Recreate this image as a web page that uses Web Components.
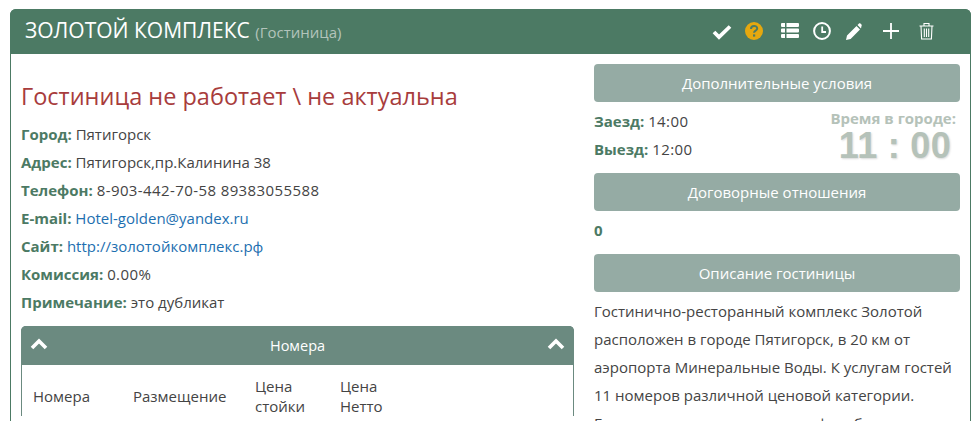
<!DOCTYPE html>
<html>
<head>
<meta charset="utf-8">
<style>
  html, body { margin: 0; padding: 0; height: 421px; overflow: hidden; background: #fff; }
  body { font-family: "Open Sans", sans-serif; font-size: 15px; color: #333; }
</style>
</head>
<body>
<hotel-panel>
  <span slot="title">ЗОЛОТОЙ КОМПЛЕКС</span>
  <span slot="kind">(Гостиница)</span>
  <hotel-info slot="left"></hotel-info>
  <rooms-table slot="left"></rooms-table>
  <hotel-side slot="right"></hotel-side>
</hotel-panel>

<script>
class HotelPanel extends HTMLElement {
  constructor() {
    super();
    const root = this.attachShadow({mode: 'open'});
    root.innerHTML = `
      <style>
        :host { display: block; margin: 9px 9px 0 10px; height: 412px; overflow: hidden; }
        #box { border: 1px solid #4c7a64; border-bottom: none; border-radius: 6px 6px 0 0; height: 412px; box-sizing: border-box; }
        header { margin: -1px -1px 0; height: 45px; background: #4c7a64; border-radius: 6px 6px 0 0; display: flex; align-items: center; padding: 0 15px; color: #fff; }
        h1 { margin: 0; font-size: 21px; font-weight: 400; flex: 1; white-space: nowrap; line-height: 45px; }
        h1 small { font-size: 15px; color: #b3c4bb; font-weight: 400; }
        #icons { display: flex; align-items: flex-start; height: 18px; margin-right: 22px; margin-top: -1px; }
        #icons svg { display: block; }
        #body { display: flex; padding: 0 10px; gap: 20px; }
        #left { width: 553px; padding-top: 26px; }
        #right { width: 366px; padding-top: 10px; }
      </style>
      <div id="box">
        <header>
          <h1><slot name="title"></slot> <small><slot name="kind"></slot></small></h1>
          <div id="icons">
            <svg width="20" height="16" viewBox="0 0 20 16" style="margin:2px 13px 0 0"><path d="M2 8l5 5L18 2.500" fill="none" stroke="#fff" stroke-width="3.800"/></svg>
            <svg width="18" height="18" viewBox="0 0 18 18" style="margin-right:18px"><circle cx="9" cy="9" r="9" fill="#e5a80f"/><path d="M6 7c0-4 6.200-4 6.200-.6 0 2.200-3.200 2.200-3.200 4.400" fill="none" stroke="#4c7a64" stroke-width="2"/><rect x="8" y="12.400" width="2.200" height="2.200" fill="#4c7a64"/></svg>
            <svg width="18" height="17" viewBox="0 0 18 17" style="margin-right:14px"><path fill="#fff" d="M1 1h3v4H1a1 1 0 0 1-1-1V2a1 1 0 0 1 1-1zM5.500 1H17a1 1 0 0 1 1 1v2a1 1 0 0 1-1 1H5.500zM1 6.500h3v4H1a1 1 0 0 1-1-1v-2a1 1 0 0 1 1-1zM5.500 6.500H17a1 1 0 0 1 1 1v2a1 1 0 0 1-1 1H5.500zM1 12h3v4H1a1 1 0 0 1-1-1v-2a1 1 0 0 1 1-1zM5.500 12H17a1 1 0 0 1 1 1v2a1 1 0 0 1-1 1H5.500z"/></svg>
            <svg width="18" height="18" viewBox="0 0 18 18" style="margin-right:15px"><circle cx="9" cy="9" r="7.900" fill="none" stroke="#fff" stroke-width="2"/><path d="M9.200 4.500V10H13" fill="none" stroke="#fff" stroke-width="1.800"/></svg>
            <svg width="16" height="17" viewBox="0 0 16 17" style="margin:1px 20px 0 0"><path fill="#fff" d="M0 17l1-4.600L10.500 3l3.500 3.500L4.600 16zM11.500 2l1.500-1.500c.4-.4 1-.4 1.400 0l1.100 1.100c.4.400.4 1 0 1.400L15 5.500z"/></svg>
            <svg width="18" height="18" viewBox="0 0 18 18" style="margin-right:19px"><path d="M9 1v16M1 9h16" fill="none" stroke="#fff" stroke-width="1.800"/></svg>
            <svg width="15" height="18" viewBox="0 0 15 18"><path d="M.5 4h14M5 4V1.500h5V4M2 4l.6 13h9.800L13 4M5.300 6.500V15M7.500 6.500V15M9.700 6.500V15" fill="none" stroke="#fff" stroke-width="1.100"/></svg>
          </div>
        </header>
        <div id="body">
          <div id="left"><slot name="left"></slot></div>
          <div id="right"><slot name="right"></slot></div>
        </div>
      </div>`;
  }
}
customElements.define('hotel-panel', HotelPanel);

class InfoRow extends HTMLElement {
  constructor() {
    super();
    this.attachShadow({mode: 'open'}).innerHTML = `
      <style>
        :host { display: block; height: 28px; line-height: 28px; font-size: 15px; font-weight: 400; color: #444; white-space: nowrap; }
        b { font-weight: 700; color: #4c7a64; }
        ::slotted(a) { color: #1d6fb0; text-decoration: none; font-weight: 400; }
        :host([digits]) slot { letter-spacing: .4px; }
      </style>
      <b></b> <slot></slot>`;
    this.shadowRoot.querySelector('b').textContent = this.getAttribute('label') + ':';
  }
}
customElements.define('info-row', InfoRow);

class HotelInfo extends HTMLElement {
  constructor() {
    super();
    this.attachShadow({mode: 'open'}).innerHTML = `
      <style>
        :host { display: block; }
        h2 { margin: 0 0 7px; font-size: 23.500px; line-height: 33px; font-weight: 400; color: #a83c3c; }
      </style>
      <h2>Гостиница не работает \\ не актуальна</h2>
      <info-row label="Город">Пятигорск</info-row>
      <info-row label="Адрес">Пятигорск,пр.Калинина 38</info-row>
      <info-row label="Телефон" digits>8-903-442-70-58 89383055588</info-row>
      <info-row label="E-mail"><a href="#">Hotel-golden@yandex.ru</a></info-row>
      <info-row label="Сайт"><a href="#">http://золотойкомплекс.рф</a></info-row>
      <info-row label="Комиссия" digits>0.00%</info-row>
      <info-row label="Примечание">это дубликат</info-row>`;
  }
}
customElements.define('hotel-info', HotelInfo);

class RoomsTable extends HTMLElement {
  constructor() {
    super();
    this.attachShadow({mode: 'open'}).innerHTML = `
      <style>
        :host { display: block; margin-top: 10px; }
        #wrap { border: 1px solid #6b8a80; border-bottom: none; border-radius: 5px 5px 0 0; }
        #top { margin: -1px -1px 0; height: 39px; background: #6b8a80; color: #fff; border-radius: 5px 5px 0 0; display: flex; align-items: center; justify-content: space-between; padding: 0 9px; font-size: 14.500px; font-weight: 400; }
        svg { display: block; margin-top: -3px; }
        #cols { display: grid; grid-template-columns: 100px 122px 85px 85px; padding: 11px 11px 0; font-size: 15px; font-weight: 400; line-height: 20px; align-items: center; color: #444; }
      </style>
      <div id="wrap">
        <div id="top">
          <svg width="18" height="12" viewBox="0 0 18 12"><path d="M2 10l7-7 7 7" fill="none" stroke="#fff" stroke-width="3.600"/></svg>
          <span>Номера</span>
          <svg width="18" height="12" viewBox="0 0 18 12"><path d="M2 10l7-7 7 7" fill="none" stroke="#fff" stroke-width="3.600"/></svg>
        </div>
        <div id="cols">
          <span>Номера</span><span>Размещение</span><span>Цена<br>стойки</span><span>Цена<br>Нетто</span>
        </div>
      </div>`;
  }
}
customElements.define('rooms-table', RoomsTable);

class SideBar extends HTMLElement {
  constructor() {
    super();
    this.attachShadow({mode: 'open'}).innerHTML = `
      <style>
        :host { display: block; height: 38px; line-height: 38px; background: #95aba4; color: #fff; border-radius: 4px; text-align: center; font-size: 15px; font-weight: 400; }
      </style>
      <slot></slot>`;
  }
}
customElements.define('side-bar', SideBar);

class HotelSide extends HTMLElement {
  constructor() {
    super();
    this.attachShadow({mode: 'open'}).innerHTML = `
      <style>
        :host { display: block; font-size: 15px; font-weight: 400; color: #444; }
        b { font-weight: 700; color: #4c7a64; }
        #times { display: flex; justify-content: space-between; height: 71px; }
        #times p { margin: 0; line-height: 28px; }
        #times p span { letter-spacing: .4px; }
        #checks { padding-top: 5px; }
        #clock { text-align: right; padding-right: 4px; color: #b5c2b9; font-weight: 700; padding-top: 7px; }
        #clock div { font-size: 15px; line-height: 18px; }
        #clock strong { display: block; font-size: 36px; line-height: 38px; letter-spacing: .3px; text-shadow: 1px 1px 2px rgba(0,0,0,.15); font-family: "Liberation Sans", sans-serif; margin-right: 5px; }
        #zero { height: 43px; line-height: 38px; font-weight: 700; color: #4c7a64; }
        p.d { margin: 0; line-height: 28px; font-size: 15px; }
        #desc { margin-top: 5px; white-space: nowrap; }
      </style>
      <side-bar>Дополнительные условия</side-bar>
      <div id="times">
        <div id="checks">
          <p><b>Заезд:</b> <span>14:00</span></p>
          <p><b>Выезд:</b> <span>12:00</span></p>
        </div>
        <div id="clock"><div>Время в городе:</div><strong>11 : 00</strong></div>
      </div>
      <side-bar>Договорные отношения</side-bar>
      <div id="zero">0</div>
      <side-bar>Описание гостиницы</side-bar>
      <div id="desc">
        <p class="d">Гостинично-ресторанный комплекс Золотой</p>
        <p class="d">расположен в городе Пятигорск, в 20 км от</p>
        <p class="d">аэропорта Минеральные Воды. К услугам гостей</p>
        <p class="d">11 номеров различной ценовой категории.</p>
        <p class="d">Гостям также предлагаются кафе и бар</p>
      </div>`;
  }
}
customElements.define('hotel-side', HotelSide);
</script>
</body>
</html>
